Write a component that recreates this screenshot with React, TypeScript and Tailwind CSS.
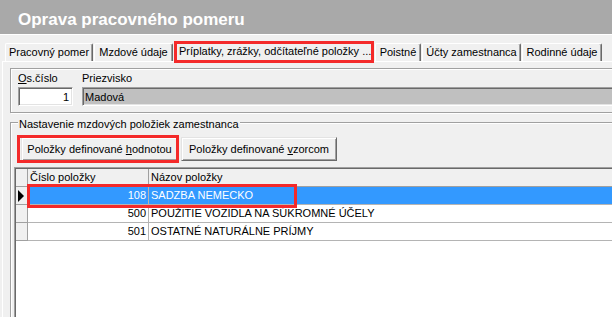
import React from "react";

function Tab({ w, children }: { w: string; children: React.ReactNode }) {
  return (
    <div
      className={`${w} h-[18px] shrink-0 ml-[1px] first:ml-0 border-t border-l border-white border-r border-r-[#696969] shadow-[inset_-1px_0_0_#a0a0a0] rounded-tl-[2px] rounded-tr-[2px] flex items-center justify-center whitespace-nowrap overflow-hidden`}
    >
      {children}
    </div>
  );
}

function Row({
  num,
  name,
  selected,
}: {
  num: string;
  name: string;
  selected?: boolean;
}) {
  return (
    <div className="flex h-[18px]">
      <div className="w-[12px] shrink-0 bg-[#f0f0f0] border-r border-b border-[#a0a0a0] flex items-center justify-center">
        {selected && (
          <svg width="7" height="12" viewBox="0 0 7 12">
            <polygon points="0,0 6,6 0,12" fill="#000" />
          </svg>
        )}
      </div>
      <div
        className={`w-[121px] shrink-0 border-r border-b border-[#b4b4b4] flex items-center justify-end pr-[2px] ${
          selected ? "bg-[#3399ff] text-white" : "bg-white"
        }`}
      >
        {num}
      </div>
      <div
        className={`flex-1 border-b border-[#b4b4b4] flex items-center pl-[2px] whitespace-nowrap ${
          selected ? "bg-[#3399ff] text-white" : "bg-white"
        }`}
      >
        {name}
      </div>
    </div>
  );
}

export default function App() {
  return (
    <div className="w-[612px] h-[317px] overflow-hidden bg-[#f0f0f0] font-['Liberation_Sans',Arial,sans-serif] text-[11px] leading-[13px] text-black flex flex-col">
      {/* Title bar */}
      <div className="h-[35px] shrink-0 bg-[#a9a9a9] border-b border-white pl-[18px] pt-[11px] text-[17px] leading-[17px] font-bold text-white whitespace-nowrap">
        Oprava pracovného pomeru
      </div>

      {/* Tabs */}
      <div className="h-[26px] shrink-0 flex items-end pl-[5px]">
        <Tab w="w-[88px]">Pracovný pomer</Tab>
        <Tab w="w-[79px]">Mzdové údaje</Tab>
        <div className="relative z-10 w-[200px] h-[21px] -mb-[1px] ml-[1px] shrink-0 bg-[#f0f0f0] border-t border-l border-white border-r border-r-[#696969] flex items-center pl-[4px] pb-[2px] whitespace-nowrap overflow-visible">
          Príplatky, zrážky, odčítateľné položky ...
          <div className="absolute left-[-1px] top-[-1px] right-[-1px] bottom-[-1px] border-[3px] border-[#f42a2a] pointer-events-none" />
        </div>
        <Tab w="w-[46px]">Poistné</Tab>
        <Tab w="w-[99px]">Účty zamestnanca</Tab>
        <Tab w="w-[80px]">Rodinné údaje</Tab>
      </div>

      {/* Panel */}
      <div className="ml-[2px] mr-[-40px] border-t border-l border-white pl-[7px] pt-[6px] flex flex-col shrink-0">
        {/* Group 1 */}
        <div className="h-[45px] shrink-0 border border-[#a0a0a0] shadow-[inset_1px_1px_0_#fff,1px_1px_0_#fff] pl-[7px] pt-[3px] flex">
          <div className="w-[55px] shrink-0 flex flex-col">
            <div className="h-[13px]">
              <span className="underline">O</span>s.číslo
            </div>
            <div className="mt-[2px] h-[19px] bg-white border border-t-[#a0a0a0] border-l-[#a0a0a0] border-b-white border-r-white shadow-[inset_1px_1px_0_#696969,inset_-1px_-1px_0_#e3e3e3] text-right pr-[3px] pt-[3px]">
              1
            </div>
          </div>
          <div className="ml-[9px] flex-1 flex flex-col">
            <div className="h-[13px]">Priezvisko</div>
            <div className="mt-[2px] h-[19px] bg-[#c0c0c0] border border-t-[#a0a0a0] border-l-[#a0a0a0] border-b-white border-r-white shadow-[inset_1px_1px_0_#696969,inset_-1px_-1px_0_#e3e3e3] pl-[2px] pt-[3px]">
              Madová
            </div>
          </div>
        </div>

        {/* Group 2 */}
        <div className="relative mt-[9px] h-[230px] shrink-0 border border-[#a0a0a0] shadow-[inset_1px_1px_0_#fff,1px_1px_0_#fff] pl-[3px] pt-[14px] flex flex-col">
          <div className="absolute top-[-5px] left-[7px] px-[1px] bg-[#f0f0f0] leading-[13px] whitespace-nowrap">
            Nastavenie mzdových položiek zamestnanca
          </div>

          {/* Buttons */}
          <div className="flex pl-[7px] shrink-0">
            <div className="relative w-[157px] h-[24px] shrink-0 bg-[#f0f0f0] border border-t-[#e3e3e3] border-l-[#e3e3e3] border-r-[#696969] border-b-[#696969] shadow-[inset_1px_1px_0_#fff,inset_-1px_-1px_0_#a0a0a0] flex items-center justify-center whitespace-nowrap">
              <span>
                Položky definované <span className="underline">h</span>odnotou
              </span>
              <div className="absolute left-[-5px] top-[-3px] w-[162px] h-[28px] border-[3px] border-[#f42a2a] pointer-events-none" />
            </div>
            <div className="ml-[3px] w-[156px] h-[24px] shrink-0 bg-[#f0f0f0] border border-t-[#e3e3e3] border-l-[#e3e3e3] border-r-[#696969] border-b-[#696969] shadow-[inset_1px_1px_0_#fff,inset_-1px_-1px_0_#a0a0a0] flex items-center justify-center whitespace-nowrap">
              <span>
                Položky definované <span className="underline">v</span>zorcom
              </span>
            </div>
          </div>

          {/* Grid */}
          <div className="relative mt-[6px] flex-1 border-l border-t border-[#a0a0a0]">
            <div className="h-full border-l border-t border-[#696969] bg-white flex flex-col">
              {/* Header */}
              <div className="flex h-[18px] bg-[#f0f0f0]">
                <div className="w-[12px] shrink-0 border-r border-b border-[#a0a0a0]" />
                <div className="w-[121px] shrink-0 border-r border-b border-[#a0a0a0] flex items-center pl-[2px]">
                  Číslo položky
                </div>
                <div className="flex-1 border-b border-[#a0a0a0] flex items-center pl-[2px]">
                  Názov položky
                </div>
              </div>
              <Row num="108" name="SADZBA NEMECKO" selected />
              <Row num="500" name="POUŽITIE VOZIDLA NA SÚKROMNÉ ÚČELY" />
              <Row num="501" name="OSTATNÉ NATURÁLNE PRÍJMY" />
            </div>
            <div className="absolute left-[12px] top-[16px] w-[270px] h-[24px] border-[3px] border-[#f42a2a] pointer-events-none" />
          </div>
        </div>
      </div>
    </div>
  );
}
